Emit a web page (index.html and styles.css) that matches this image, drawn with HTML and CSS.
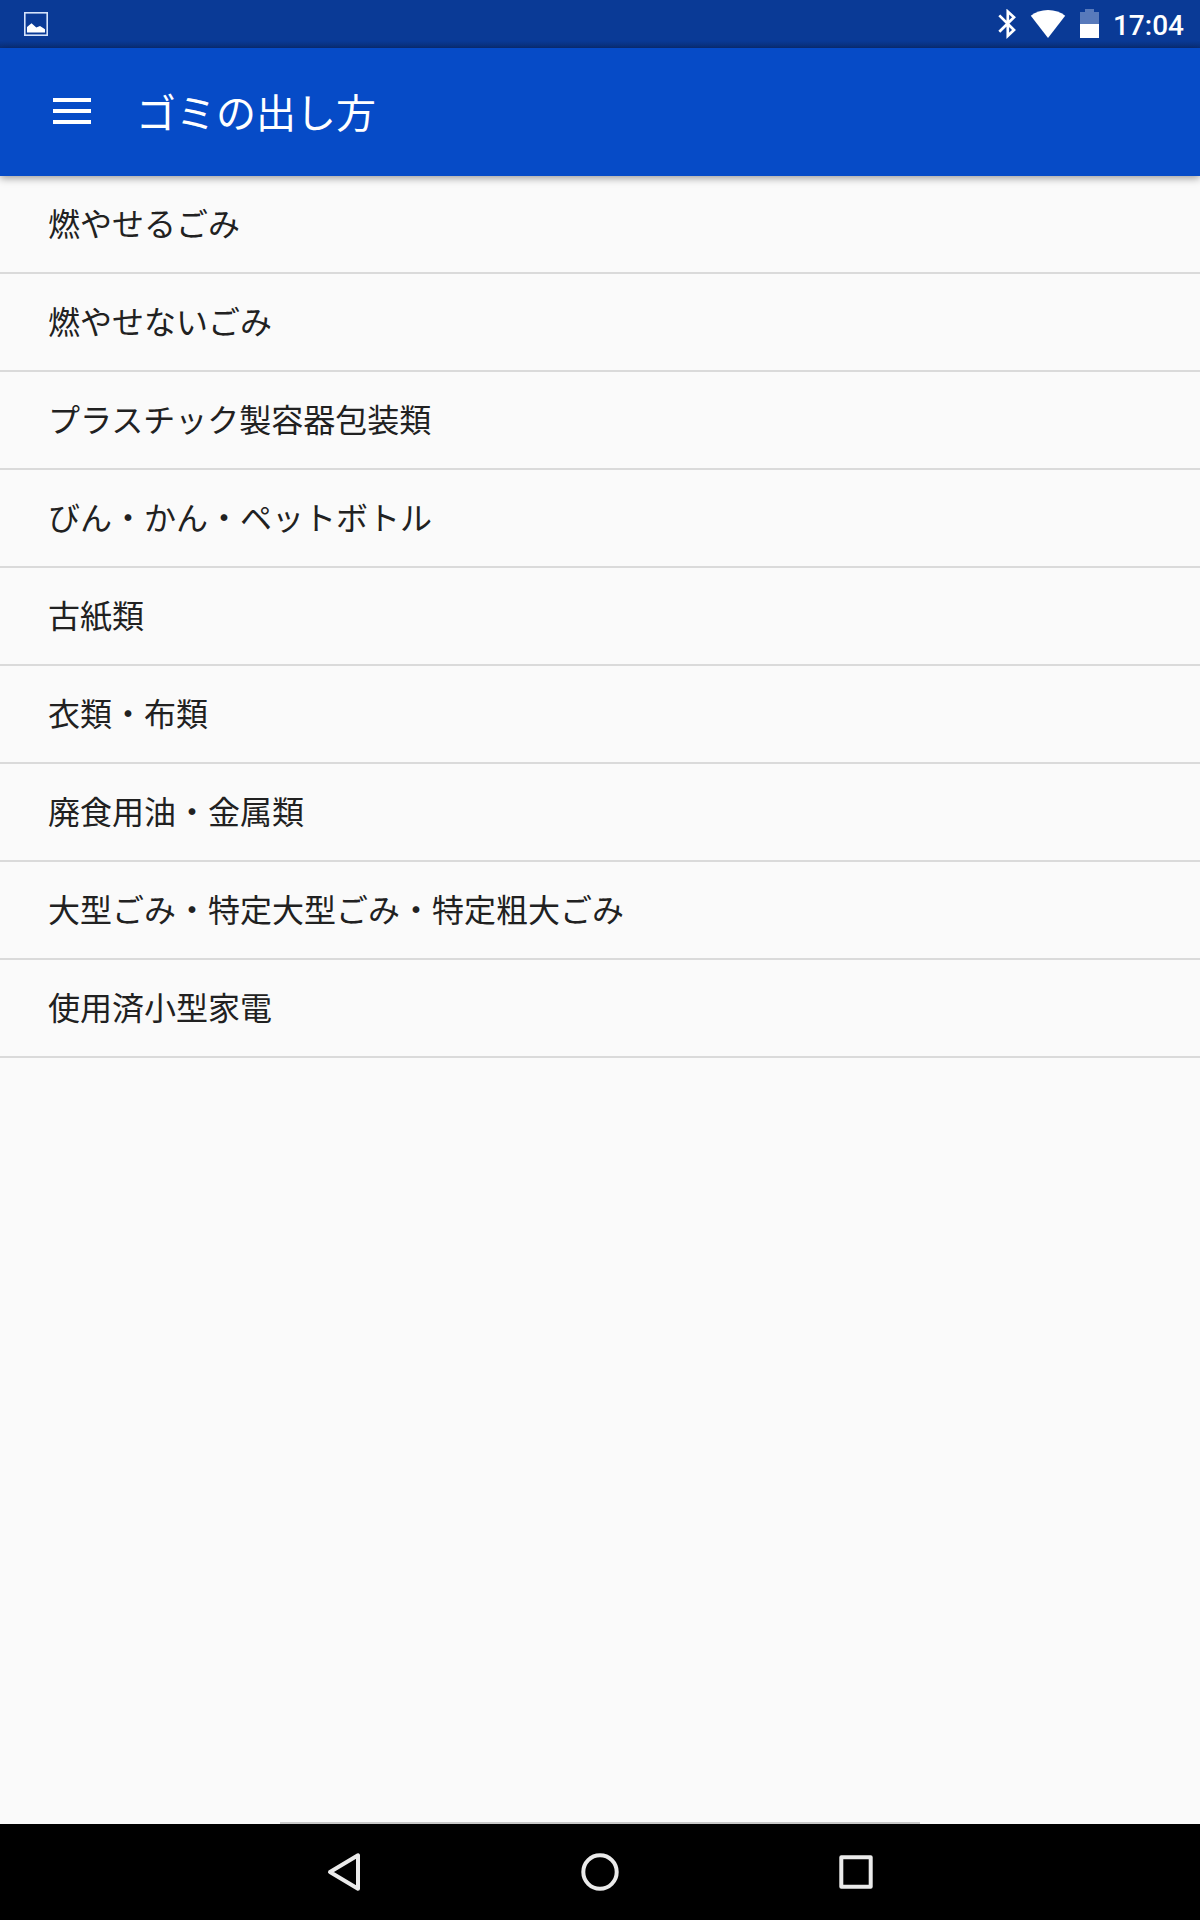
FILE: index.html
```
<!DOCTYPE html>
<html lang="ja">
<head>
  <meta charset="UTF-8" />
  <title>ゴミの出し方</title>
  <meta name="viewport" content="width=device-width, initial-scale=1" />
  <link rel="stylesheet" href="styles.css">
</head>
<body>

  <div class="status-bar">
    <svg class="icon-picture" width="24" height="24" viewBox="0 0 24 24">
      <rect x="0.8" y="0.8" width="22.4" height="22.4" fill="none" stroke="#d5e3fb" stroke-width="1.6"/>
      <path d="M3 20.5v-5.5l4.5-3.8 4.8 4.3 3.7-1.6 5 3.4v3.2z" fill="#fff"/>
    </svg>
    <div class="status-right">
      <svg class="icon-bluetooth" width="19" height="30" viewBox="0 0 19 30">
        <path d="M1.3 6.4L16 21L9.8 26.8V2.6L16 8.2L1.3 22.8" fill="none" stroke="#fff" stroke-width="2.7"/>
      </svg>
      <svg class="icon-wifi" width="36" height="30" viewBox="0 0 36 30">
        <path d="M18 29L0.8 6.8C5.4 3.1 11.3 1 18 1s12.6 2.1 17.2 5.8z" fill="#fff"/>
      </svg>
      <svg class="icon-battery" width="19" height="30" viewBox="0 0 19 30">
        <path d="M0 15V3h5V0h9v3h5v12z" fill="#587abb"/>
        <rect y="15" width="19" height="14" fill="#fff"/>
      </svg>
      <span class="clock">17:04</span>
    </div>
  </div>

  <header>
    <button class="menu-btn" aria-label="メニュー">
      <span></span>
      <span></span>
      <span></span>
    </button>
    <h1>ゴミの出し方</h1>
  </header>

  <main>
    <ul class="garbage-list">
      <li>燃やせるごみ</li>
      <li>燃やせないごみ</li>
      <li>プラスチック製容器包装類</li>
      <li>びん・かん・ペットボトル</li>
      <li>古紙類</li>
      <li>衣類・布類</li>
      <li>廃食用油・金属類</li>
      <li>大型ごみ・特定大型ごみ・特定粗大ごみ</li>
      <li>使用済小型家電</li>
    </ul>
    <div class="bottom-edge"></div>
  </main>

  <nav class="nav-bar">
    <svg width="48" height="48" viewBox="0 0 48 48">
      <path d="M38 7.3v33.4L10 24z"/>
    </svg>
    <svg width="48" height="48" viewBox="0 0 48 48">
      <circle cx="24" cy="24" r="16.7"/>
    </svg>
    <svg width="48" height="48" viewBox="0 0 48 48">
      <rect x="9.3" y="9.3" width="29.4" height="29.4"/>
    </svg>
  </nav>

</body>
</html>
```

FILE: styles.css
```
:root {
  --primary: #064bc7;
  --primary-dark: #0a3a96;
  --bg: #fafafa;
  --fg: #212121;
  --divider: #dadada;
}

* {
  box-sizing: border-box;
}

body {
  font-family: Roboto, "Noto Sans CJK JP", sans-serif;
  background-color: var(--bg);
  color: var(--fg);
  margin: 0;
  height: 1920px;
  display: flex;
  flex-direction: column;
}

.status-bar {
  display: flex;
  justify-content: space-between;
  align-items: center;
  height: 48px;
  padding: 0 16px 0 24px;
  background: linear-gradient(var(--primary-dark) 85%, #092f7c);
}

.status-right {
  display: flex;
  align-items: center;
}

.icon-bluetooth {
  margin-right: 13px;
}

.icon-wifi {
  margin-right: 14px;
}

.icon-battery {
  margin-right: 14px;
}

.clock {
  color: #fff;
  font-size: 28px;
  font-weight: 500;
  line-height: 28px;
  padding-top: 4px;
}

header {
  display: flex;
  align-items: center;
  height: 128px;
  padding-left: 53px;
  background-color: var(--primary);
  box-shadow: 0 2px 8px rgba(0,0,0,0.4);
}

.menu-btn {
  display: flex;
  flex-direction: column;
  gap: 7px;
  width: 38px;
  margin-right: 45px;
  padding: 0 0 2px;
  background: none;
  border: none;
}

.menu-btn span {
  height: 4px;
  background-color: #fff;
}

h1 {
  margin: 0;
  padding-top: 5px;
  color: #fff;
  font-size: 40px;
  font-weight: 400;
  line-height: 60px;
}

main {
  display: flex;
  flex-direction: column;
  justify-content: space-between;
  flex: 1;
}

.garbage-list {
  list-style: none;
  margin: 0;
  padding: 0;
}

.garbage-list li {
  height: 98px;
  padding-left: 48px;
  border-bottom: 2px solid var(--divider);
  font-size: 32px;
  line-height: 98px;
}

.bottom-edge {
  align-self: center;
  width: 640px;
  height: 2px;
  background-color: #c9c9c9;
}

.nav-bar {
  display: flex;
  justify-content: center;
  align-items: center;
  gap: 208px;
  height: 96px;
  background-color: #000;
}

.nav-bar svg {
  fill: none;
  stroke: #ebebeb;
  stroke-width: 4;
  stroke-linejoin: round;
}
```
